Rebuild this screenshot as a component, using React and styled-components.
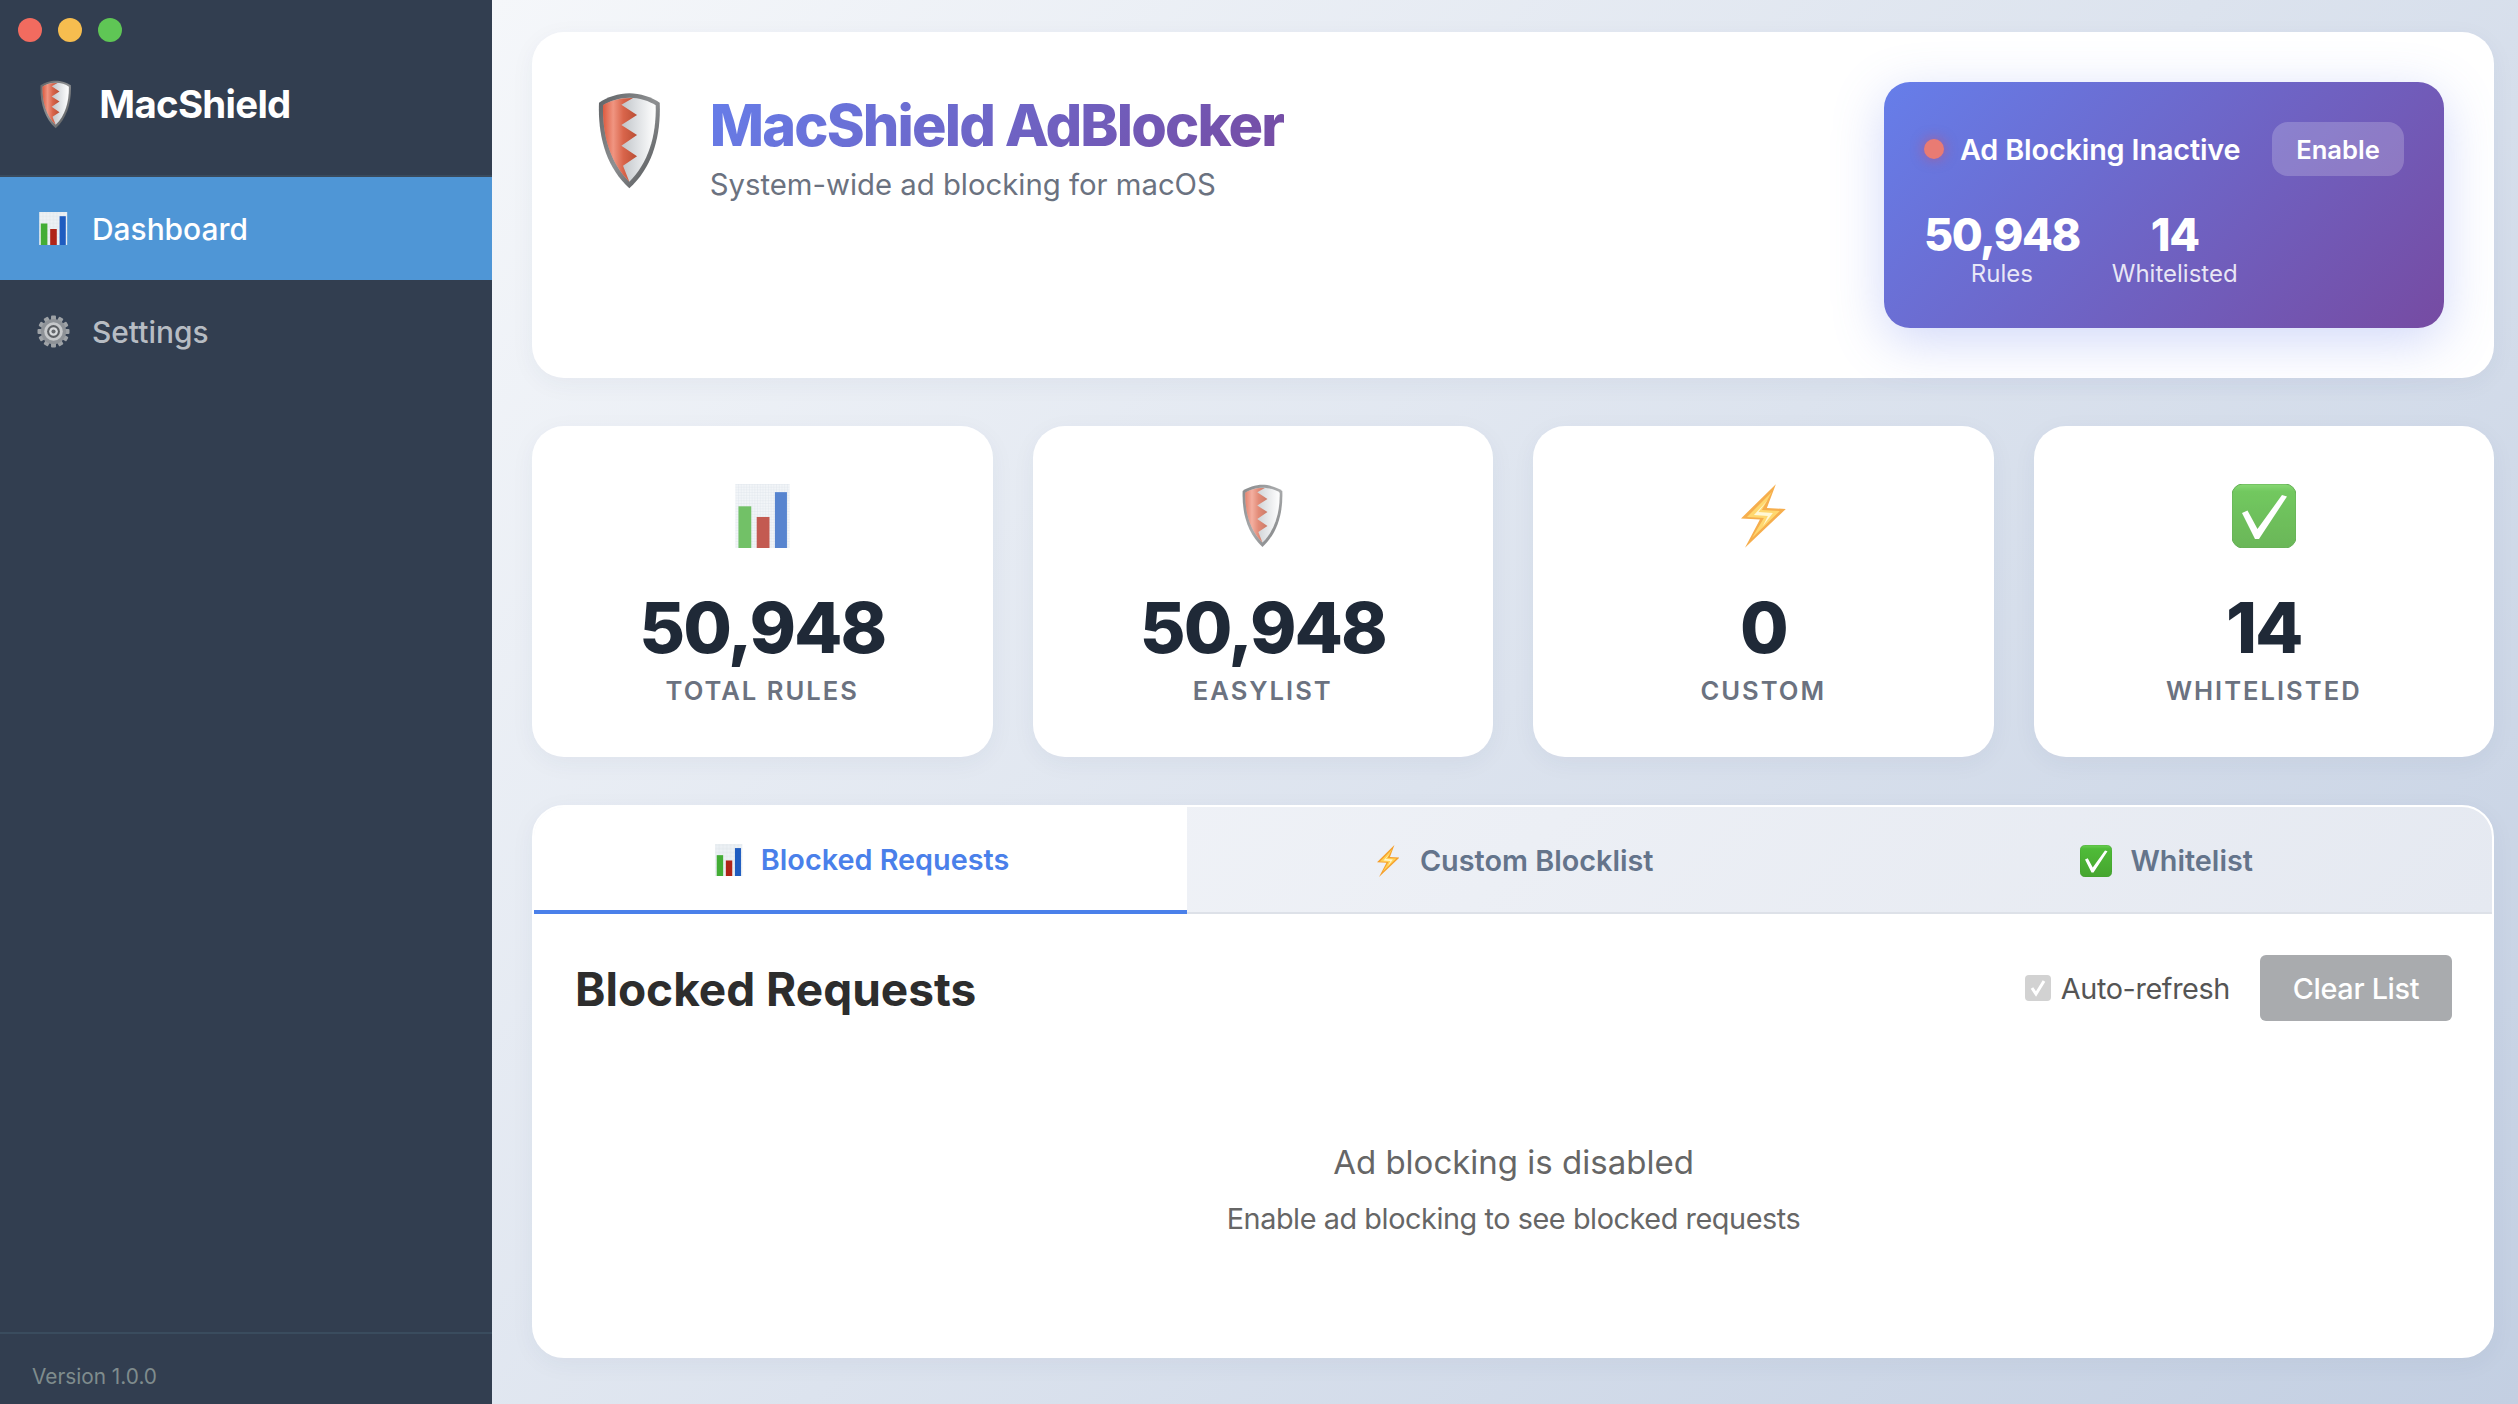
import React, { useId } from 'react';
import styled, { createGlobalStyle } from 'styled-components';

const Global = createGlobalStyle`
  html, body { margin: 0; padding: 0; height: 100%; }
  body { font-family: Inter, "Liberation Sans", sans-serif; overflow: hidden; }
  * { box-sizing: border-box; }
  #root { height: 100%; }
`;

const Shield = ({ height, faded }) => {
  const id = useId().replace(/[^a-zA-Z0-9]/g, '');
  return (
    <svg width={height * 0.64} height={height} viewBox="-3 -2 188 290" opacity={faded ? 0.75 : 1}>
      <defs>
        <linearGradient id={id + 'r'} x1="0" x2="1" y1="0" y2="0">
          <stop offset="0" stopColor="#dc5b40" />
          <stop offset="0.3" stopColor="#f09581" />
          <stop offset="0.6" stopColor="#d9654b" />
          <stop offset="1" stopColor="#b94e35" />
        </linearGradient>
        <linearGradient id={id + 'w'} x1="0" x2="1" y1="0" y2="0">
          <stop offset="0" stopColor="#9ea3a8" />
          <stop offset="0.6" stopColor="#d9dcdf" />
          <stop offset="1" stopColor="#ffffff" />
        </linearGradient>
        <linearGradient id={id + 'b'} x1="0" x2="1" y1="0" y2="1">
          <stop offset="0" stopColor="#5f6265" />
          <stop offset="0.5" stopColor="#8e9092" />
          <stop offset="1" stopColor="#4a4d50" />
        </linearGradient>
      </defs>
      <path d="M91 0C122 0 160 12 182 28C186 130 160 222 91 285C22 222-4 130 0 28C22 12 60 0 91 0Z" fill={`url(#${id}b)`} />
      <path d="M91 13C120 13 152 23 170 36C172 128 148 208 91 265C34 208 10 128 12 36C30 23 62 13 91 13Z" fill={`url(#${id}w)`} />
      <path d="M102 14L67 34L114 65L67 95L114 125L67 157L114 189L72 217L91 265C34 208 10 128 12 36C30 23 62 13 102 14Z" fill={`url(#${id}r)`} />
    </svg>
  );
};

const ChartIcon = ({ size, faded }) => {
  const id = useId().replace(/[^a-zA-Z0-9]/g, '');
  return (
    <svg width={size * 0.86} height={size} viewBox="0 0 28 33" opacity={faded ? 0.75 : 1}>
      <defs>
        <pattern id={id} width="1.4" height="1.4" patternUnits="userSpaceOnUse">
          <rect width="1.4" height="1.4" fill="#eef2f6" />
          <path d="M0 0H1.4M0 0V1.4" stroke="#cfd6df" strokeWidth="0.3" />
        </pattern>
      </defs>
      <rect width="28" height="33" fill={`url(#${id})`} />
      <rect x="1.6" y="11.5" width="6.6" height="21.5" fill="#43ad35" />
      <rect x="11" y="17" width="6.6" height="16" fill="#b02418" />
      <rect x="20.4" y="4.2" width="6.2" height="28.8" fill="#1f5cc0" />
    </svg>
  );
};

const GearIcon = ({ size }) => {
  const teeth = Array.from({ length: 12 }, (_, i) => i * 30);
  return (
    <svg width={size} height={size} viewBox="0 0 32 32">
      {teeth.map((a) => (
        <rect key={a} x="13.6" y="0.5" width="4.8" height="6" rx="1" fill="#9ea2a6" transform={`rotate(${a} 16 16)`} />
      ))}
      <circle cx="16" cy="16" r="12.2" fill="#8e9297" />
      <circle cx="16" cy="16" r="9" fill="#c6c8ca" />
      <circle cx="16" cy="16" r="6.2" fill="#5d6064" />
      <circle cx="16" cy="16" r="4.2" fill="#d8dadc" />
      <circle cx="16" cy="16" r="2" fill="#66696d" />
    </svg>
  );
};

const BoltIcon = ({ size, faded }) => (
  <svg width={size * 0.7} height={size} viewBox="0 0 45 64" opacity={faded ? 0.85 : 1}>
    <path d="M35 0L0 34.500L19 35.500L4 64L45 25L26 24Z" fill="#f5a02e" />
    <path d="M31 8L6 33L23 34L11 54L39 27L21 26Z" fill="#ffd257" />
    <path d="M27 16L13 31L27 32L22 42L32 29L17.500 28Z" fill="#fff7cf" />
  </svg>
);

const CheckIcon = ({ size, faded }) => {
  const id = useId().replace(/[^a-zA-Z0-9]/g, '');
  return (
    <svg width={size} height={size} viewBox="0 0 64 64" opacity={faded ? 0.8 : 1}>
      <defs>
        <linearGradient id={id} x1="0" x2="0" y1="0" y2="1">
          <stop offset="0" stopColor="#6bd052" />
          <stop offset="0.12" stopColor="#4fbb38" />
          <stop offset="1" stopColor="#46a52f" />
        </linearGradient>
      </defs>
      <rect width="64" height="64" rx="11" fill={`url(#${id})`} stroke="#3f9b2c" strokeWidth="1" />
      <path d="M10 29L15.500 26.500L25.500 45L50 11L55 12.500L27 55L23 55Z" fill="#fff" />
    </svg>
  );
};

const App_ = styled.div`
  display: flex;
  height: 100vh;
  width: 100vw;
`;

const Sidebar = styled.aside`
  width: 492px;
  flex: none;
  background: #323e50;
  display: flex;
  flex-direction: column;
`;

const TrafficLights = styled.div`
  display: flex;
  gap: 16px;
  padding: 18px 18px 0;
  height: 42px;
`;

const Light = styled.span`
  width: 24px;
  height: 24px;
  border-radius: 50%;
  background: ${(p) => p.$color};
`;

const Brand = styled.div`
  display: flex;
  align-items: center;
  gap: 28px;
  height: 135px;
  padding: 0 0 9px 40px;
  border-bottom: 2px solid #3a4a5c;
`;

const BrandName = styled.div`
  font-size: 38.4px;
  font-weight: 700;
  letter-spacing: -0.7px;
  color: #fff;
`;

const NavItem = styled.div`
  display: flex;
  align-items: center;
  height: 103px;
  padding-left: 36px;
  gap: 21px;
  font-size: 29.9px;
  font-weight: 500;
  background: ${(p) => (p.$active ? '#4f96d6' : 'transparent')};
  color: ${(p) => (p.$active ? '#fff' : '#b7bcc3')};
`;

const NavIcon = styled.span`
  width: 35px;
  display: flex;
  justify-content: center;
`;

const SideFooter = styled.div`
  margin-top: auto;
  height: 72px;
  border-top: 2px solid #3a4c5e;
  padding: 28px 0 0 32px;
  font-size: 20.8px;
  line-height: 30px;
  color: #7f8c8d;
`;

const Main = styled.main`
  flex: 1;
  min-width: 0;
  display: flex;
  flex-direction: column;
  gap: 48px;
  padding: 32px 24px 46px 40px;
  background: linear-gradient(135deg, #f5f7fa 0%, #c3cfe2 100%);
`;

const Header = styled.header`
  display: flex;
  justify-content: space-between;
  align-items: flex-start;
  background: #fff;
  border-radius: 32px;
  padding: 50px;
  height: 346px;
  box-shadow: 0 6px 24px rgba(40, 60, 100, 0.05);
`;

const HeaderBrand = styled.div`
  display: flex;
  align-items: flex-start;
  gap: 49px;
  padding: 10px 0 0 16px;
`;

const TitleBlock = styled.div`
  display: flex;
  flex-direction: column;
`;

const Title = styled.h1`
  margin: -3px 0 4px;
  font-size: 57.6px;
  line-height: 72px;
  font-weight: 800;
  letter-spacing: -1.85px;
  background: linear-gradient(135deg, #667eea, #764ba2);
  -webkit-background-clip: text;
  background-clip: text;
  color: transparent;
`;

const Subtitle = styled.p`
  margin: 0;
  font-size: 29.3px;
  line-height: 40px;
  color: #6b7280;
`;

const StatusCard = styled.div`
  width: 560px;
  height: 246px;
  border-radius: 26px;
  padding: 40px;
  background: linear-gradient(135deg, #667eea 0%, #764ba2 100%);
  box-shadow: 0 13px 51px rgba(102, 126, 234, 0.3);
  color: #fff;
  display: flex;
  flex-direction: column;
  gap: 35px;
`;

const StatusTop = styled.div`
  display: flex;
  align-items: center;
  height: 54px;
`;

const StatusDot = styled.span`
  width: 20px;
  height: 20px;
  border-radius: 50%;
  background: #e97b73;
  box-shadow: 0 0 13px rgba(239, 68, 68, 0.5);
  margin-right: 16px;
`;

const StatusText = styled.span`
  font-size: 28.8px;
  font-weight: 600;
  letter-spacing: -0.15px;
`;

const EnableButton = styled.button`
  margin-left: auto;
  width: 132px;
  height: 54px;
  border: 0;
  border-radius: 16px;
  background: rgba(255, 255, 255, 0.2);
  color: #fff;
  font: 600 25.6px Inter, sans-serif;
`;

const MiniStats = styled.div`
  display: flex;
  gap: 32px;
`;

const MiniStat = styled.div`
  display: flex;
  flex-direction: column;
  align-items: center;
`;

const MiniValue = styled.div`
  font-size: 44.8px;
  line-height: 48px;
  font-weight: 800;
  letter-spacing: -1.4px;
`;

const MiniLabel = styled.div`
  font-size: 24px;
  line-height: 30px;
  color: rgba(255, 255, 255, 0.85);
`;

const StatsGrid = styled.section`
  display: grid;
  grid-template-columns: repeat(4, 1fr);
  gap: 40px;
`;

const StatCard = styled.div`
  height: 331px;
  background: #fff;
  border-radius: 32px;
  padding-top: 58px;
  display: flex;
  flex-direction: column;
  align-items: center;
  box-shadow: 0 6px 24px rgba(40, 60, 100, 0.05);
`;

const StatIcon = styled.div`
  height: 64px;
  display: flex;
  align-items: center;
  justify-content: center;
`;

const StatValue = styled.div`
  margin-top: 38px;
  font-size: 70.4px;
  line-height: 84px;
  font-weight: 800;
  letter-spacing: -2px;
  color: #1f2937;
`;

const StatLabel = styled.div`
  margin-top: 3px;
  font-size: 25.6px;
  line-height: 36px;
  font-weight: 600;
  letter-spacing: 2px;
  color: #6b7280;
`;

const Panel = styled.section`
  flex: 1;
  min-height: 0;
  display: flex;
  flex-direction: column;
  background: #fff;
  border: 2px solid #fff;
  border-radius: 32px;
  overflow: hidden;
  box-shadow: 0 6px 24px rgba(40, 60, 100, 0.05);
`;

const TabBar = styled.div`
  display: grid;
  grid-template-columns: repeat(3, 1fr);
  height: 107px;
  flex: none;
  background: linear-gradient(135deg, #f3f5f9, #e5e9f1);
  border-bottom: 2px solid #dde1e8;
`;

const Tab = styled.div`
  display: flex;
  align-items: center;
  justify-content: center;
  gap: 18px;
  margin-bottom: ${(p) => (p.$active ? '-2px' : '0')};
  padding: 2px 0 0 ${(p) => (p.$active ? '4px' : '2px')};
  font-size: 28.8px;
  font-weight: 600;
  color: ${(p) => (p.$active ? '#4a80ea' : '#64748b')};
  background: ${(p) => (p.$active ? '#fff' : 'transparent')};
  border-bottom: ${(p) => (p.$active ? '4px solid #4a80ea' : '0')};
`;

const TabBoltSlot = styled.span`
  display: flex;
  padding: 0 3px 0 2px;
`;

const PanelBody = styled.div`
  flex: 1;
  display: flex;
  flex-direction: column;
  padding: 41px 40px 0 41px;
`;

const PanelHead = styled.div`
  display: flex;
  align-items: center;
  justify-content: space-between;
  height: 66px;
`;

const PanelTitle = styled.h2`
  margin: 0;
  padding-top: 2px;
  font-size: 46px;
  font-weight: 700;
  color: #2d2d2d;
`;

const PanelActions = styled.div`
  display: flex;
  align-items: center;
`;

const AutoRefresh = styled.label`
  display: flex;
  align-items: center;
  gap: 10px;
  font-size: 28.8px;
  letter-spacing: -0.38px;
  color: #555;
  margin-right: 30px;
`;

const CheckBox = styled.span`
  width: 26px;
  height: 26px;
  border-radius: 4px;
  background: #d2d2d2;
  display: flex;
  align-items: center;
  justify-content: center;
`;

const ClearButton = styled.button`
  width: 192px;
  height: 66px;
  border: 0;
  border-radius: 6px;
  background: #a9abae;
  color: #fff;
  font: 500 28.8px Inter, sans-serif;
  letter-spacing: -0.3px;
`;

const Empty = styled.div`
  margin-top: 119px;
  text-align: center;
  color: #666;
`;

const EmptyTitle = styled.div`
  font-size: 33px;
  line-height: 44px;
`;

const EmptyText = styled.div`
  margin-top: 15px;
  font-size: 28.8px;
  line-height: 40px;
  letter-spacing: -0.42px;
`;

export default function App() {
  return (
    <App_>
      <Global />
      <Sidebar>
        <TrafficLights>
          <Light $color="#f26b5f" />
          <Light $color="#f6bd4f" />
          <Light $color="#5fc655" />
        </TrafficLights>
        <Brand>
          <Shield height={49} />
          <BrandName>MacShield</BrandName>
        </Brand>
        <NavItem $active>
          <NavIcon><ChartIcon size={33} /></NavIcon>
          Dashboard
        </NavItem>
        <NavItem>
          <NavIcon><GearIcon size={33} /></NavIcon>
          Settings
        </NavItem>
        <SideFooter>Version 1.0.0</SideFooter>
      </Sidebar>
      <Main>
        <Header>
          <HeaderBrand>
            <Shield height={98} />
            <TitleBlock>
              <Title>MacShield AdBlocker</Title>
              <Subtitle>System-wide ad blocking for macOS</Subtitle>
            </TitleBlock>
          </HeaderBrand>
          <StatusCard>
            <StatusTop>
              <StatusDot />
              <StatusText>Ad Blocking Inactive</StatusText>
              <EnableButton>Enable</EnableButton>
            </StatusTop>
            <MiniStats>
              <MiniStat>
                <MiniValue>50,948</MiniValue>
                <MiniLabel>Rules</MiniLabel>
              </MiniStat>
              <MiniStat>
                <MiniValue>14</MiniValue>
                <MiniLabel>Whitelisted</MiniLabel>
              </MiniStat>
            </MiniStats>
          </StatusCard>
        </Header>
        <StatsGrid>
          <StatCard>
            <StatIcon><ChartIcon size={64} faded /></StatIcon>
            <StatValue>50,948</StatValue>
            <StatLabel>TOTAL RULES</StatLabel>
          </StatCard>
          <StatCard>
            <StatIcon><Shield height={64} faded /></StatIcon>
            <StatValue>50,948</StatValue>
            <StatLabel>EASYLIST</StatLabel>
          </StatCard>
          <StatCard>
            <StatIcon><BoltIcon size={64} faded /></StatIcon>
            <StatValue>0</StatValue>
            <StatLabel>CUSTOM</StatLabel>
          </StatCard>
          <StatCard>
            <StatIcon><CheckIcon size={64} faded /></StatIcon>
            <StatValue>14</StatValue>
            <StatLabel>WHITELISTED</StatLabel>
          </StatCard>
        </StatsGrid>
        <Panel>
          <TabBar>
            <Tab $active><ChartIcon size={32} /> Blocked Requests</Tab>
            <Tab><TabBoltSlot><BoltIcon size={32} /></TabBoltSlot> Custom Blocklist</Tab>
            <Tab><CheckIcon size={32} /> Whitelist</Tab>
          </TabBar>
          <PanelBody>
            <PanelHead>
              <PanelTitle>Blocked Requests</PanelTitle>
              <PanelActions>
                <AutoRefresh>
                  <CheckBox>
                    <svg width="18" height="18" viewBox="0 0 18 18">
                      <path d="M3 9L7 15L15 2" fill="none" stroke="#fff" strokeWidth="3" />
                    </svg>
                  </CheckBox>
                  Auto-refresh
                </AutoRefresh>
                <ClearButton>Clear List</ClearButton>
              </PanelActions>
            </PanelHead>
            <Empty>
              <EmptyTitle>Ad blocking is disabled</EmptyTitle>
              <EmptyText>Enable ad blocking to see blocked requests</EmptyText>
            </Empty>
          </PanelBody>
        </Panel>
      </Main>
    </App_>
  );
}
